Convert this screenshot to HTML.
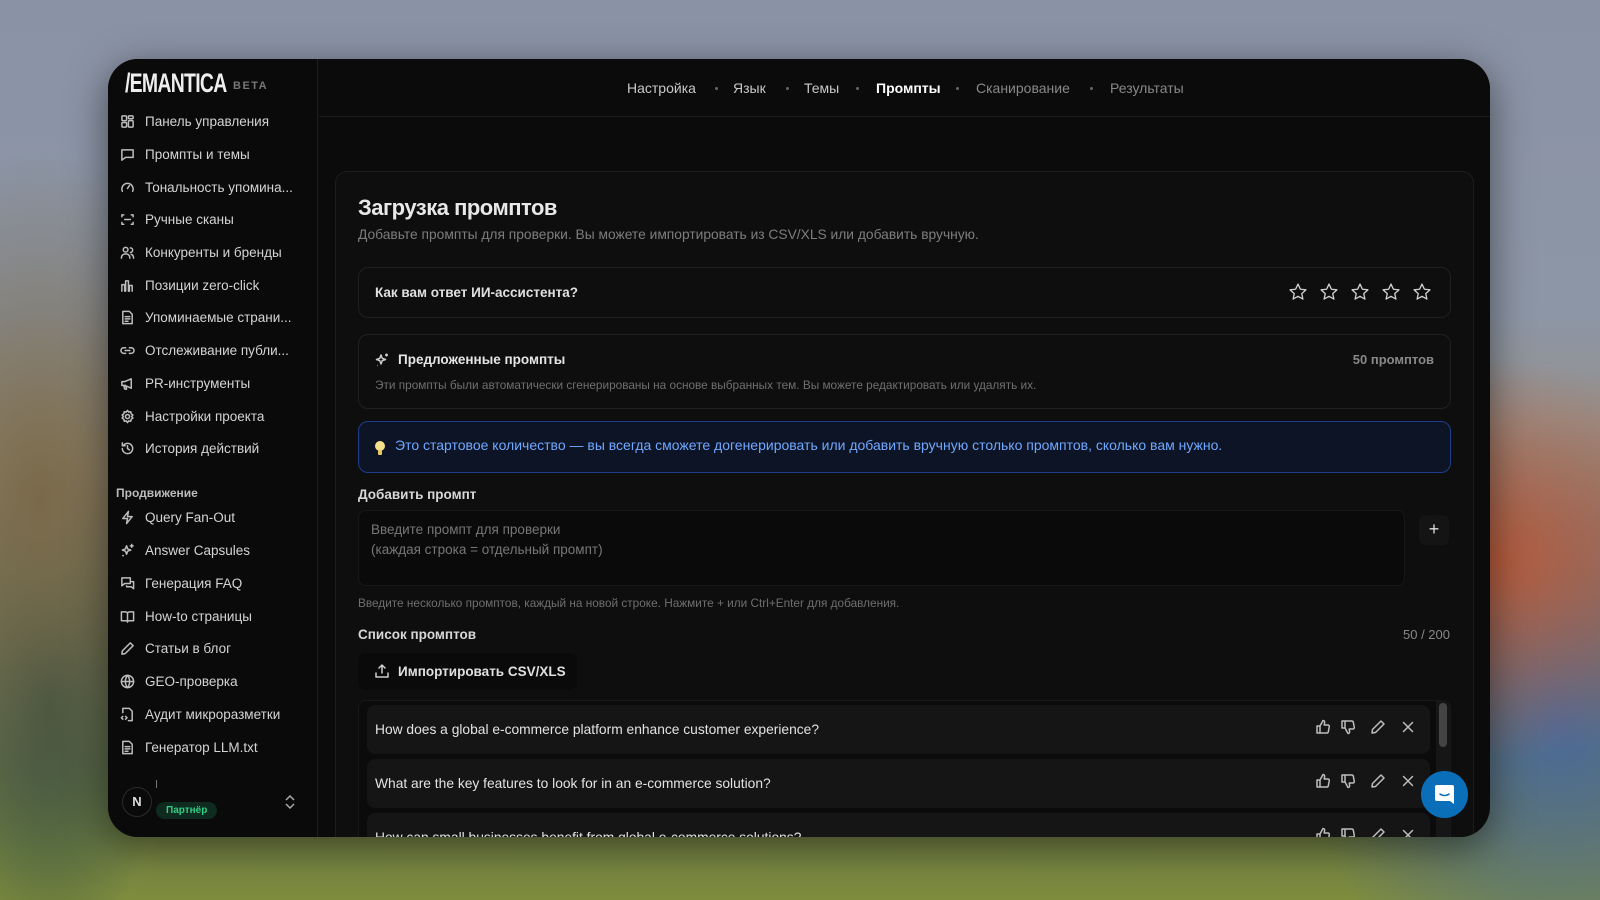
<!DOCTYPE html>
<html><head><meta charset="utf-8">
<style>
*{box-sizing:border-box;margin:0;padding:0}
body{width:1600px;height:900px;overflow:hidden;position:relative;font-family:"Liberation Sans","DejaVu Sans",sans-serif;
background:
radial-gradient(ellipse 300px 200px at 1480px 560px,#b85a3a 0%,rgba(184,90,58,0) 100%),
radial-gradient(ellipse 260px 300px at 1560px 720px,#4a6a9a 0%,rgba(74,106,154,0) 100%),
radial-gradient(ellipse 200px 350px at 40px 500px,#7a6a4a 0%,rgba(122,106,74,0) 100%),
radial-gradient(ellipse 120px 250px at 50px 700px,#2e4a3a 0%,rgba(46,74,58,0) 100%),
linear-gradient(180deg,#8a93a6 0%,#8d96a6 35%,#9a8e7a 55%,#6c7a4e 85%,#7e8c3e 100%);}
.abs{position:absolute}
.win{left:108px;top:59px;width:1382px;height:778px;background:#0b0b0c;border-radius:30px;overflow:hidden;box-shadow:0 10px 40px rgba(0,0,0,.5)}
.side{left:0;top:0;width:210px;height:100%;background:#0a0a0a;border-right:1px solid #1e1e1e}
.nav{position:absolute;left:12px;display:flex;align-items:center;color:#d4d4d4;font-size:13.5px;white-space:nowrap}
.nav svg{width:15px;height:15px;margin-right:10px;stroke:#bdbdbd;fill:none;stroke-width:1.6;stroke-linecap:round;stroke-linejoin:round}
.top{left:211px;top:0;right:0;height:58px;border-bottom:1px solid #1c1c1c;background:#0b0b0c}
.tn{position:absolute;top:21px;font-size:14px;color:#c8c8c8}
.dot{position:absolute;top:28px;width:3px;height:3px;border-radius:50%;background:#666}
.card{left:227px;top:112px;width:1139px;height:700px;background:#0e0e0f;border:1px solid #1d1d1e;border-radius:12px}
.box{position:absolute;border:1px solid #202022;border-radius:10px;background:#0e0e0f}
.star{width:20px;height:20px;fill:none;stroke:#cfcfcf;stroke-width:1.6;stroke-linejoin:round}
.item{position:absolute;left:8px;width:1063px;height:49px;background:#151516;border-radius:8px;color:#e3e3e3;font-size:13.8px;padding:17px 0 0 8px}
.acts{position:absolute;right:14px;top:14px;display:flex;gap:9px}
.acts svg{width:16px;height:16px;fill:none;stroke:#bdbdbd;stroke-width:1.5;stroke-linecap:round;stroke-linejoin:round}
.acts svg.m{margin-left:5px}
</style></head><body>
<div class="abs win">
 <div class="abs side">
  <div class="abs" style="left:17px;top:9px;font-family:'Liberation Sans Narrow','Liberation Sans',sans-serif;font-weight:bold;font-size:27px;color:#eee;letter-spacing:-1px;transform:scaleX(.72);transform-origin:left;white-space:nowrap">/EMANTICA</div>
  <div class="abs" style="left:125px;top:21px;font-size:11px;color:#777;letter-spacing:1.5px;font-weight:bold">BETA</div>
  <div class="nav" style="top:55px"><svg viewBox="0 0 16 16"><rect x="2" y="2" width="5" height="5" rx="1"/><rect x="9" y="2" width="5" height="3" rx="1"/><rect x="2" y="9" width="5" height="5" rx="1"/><rect x="9" y="7" width="5" height="7" rx="1"/></svg>Панель управления</div>
  <div class="nav" style="top:88px"><svg viewBox="0 0 16 16"><path d="M2 3h12v8H6l-4 3z"/></svg>Промпты и темы</div>
  <div class="nav" style="top:121px"><svg viewBox="0 0 16 16"><path d="M2.5 12a6 6 0 1 1 11 0"/><path d="M8 9l2-3"/></svg>Тональность упомина...</div>
  <div class="nav" style="top:153px"><svg viewBox="0 0 16 16"><path d="M2 5V3h2M12 3h2v2M2 11v2h2M12 13h2v-2M5 8h6"/></svg>Ручные сканы</div>
  <div class="nav" style="top:186px"><svg viewBox="0 0 16 16"><circle cx="6" cy="5" r="2.5"/><path d="M1.5 14c0-3 2-4.5 4.5-4.5s4.5 1.5 4.5 4.5M11 3a2.5 2.5 0 0 1 0 5M14.5 14c0-2-1-3.5-2.5-4"/></svg>Конкуренты и бренды</div>
  <div class="nav" style="top:219px"><svg viewBox="0 0 16 16"><path d="M2 14V7h3v7M6 14V3h3v11M10 14V8h3v6"/></svg>Позиции zero-click</div>
  <div class="nav" style="top:251px"><svg viewBox="0 0 16 16"><path d="M3 1.5h7l3 3v10H3z M5.5 7h5M5.5 9.5h5M5.5 12h3"/></svg>Упоминаемые страни...</div>
  <div class="nav" style="top:284px"><svg viewBox="0 0 16 16"><path d="M6 5H4a3 3 0 0 0 0 6h2M10 5h2a3 3 0 0 1 0 6h-2M5.5 8h5"/></svg>Отслеживание публи...</div>
  <div class="nav" style="top:317px"><svg viewBox="0 0 16 16"><path d="M2 6v4h3l7 3V3L5 6z M4 10l1 4h2l-1-4"/></svg>PR-инструменты</div>
  <div class="nav" style="top:350px"><svg viewBox="0 0 16 16"><circle cx="8" cy="8" r="2.2"/><path d="M8 1.5l1.3 1.8 2.2-.4.4 2.2 1.8 1.3-1.2 1.6 1.2 1.6-1.8 1.3-.4 2.2-2.2-.4L8 14.5l-1.3-1.8-2.2.4-.4-2.2L2.3 9.6 3.5 8 2.3 6.4l1.8-1.3.4-2.2 2.2.4z"/></svg>Настройки проекта</div>
  <div class="nav" style="top:382px"><svg viewBox="0 0 16 16"><path d="M2.5 8a5.5 5.5 0 1 0 1.6-3.9M2.5 2v3h3M8 5v3l2 1.5"/></svg>История действий</div>
  <div class="abs" style="left:8px;top:427px;font-size:12px;color:#bbb;font-weight:bold">Продвижение</div>
  <div class="nav" style="top:451px"><svg viewBox="0 0 16 16"><path d="M9 1.5L3 9h5l-1 5.5L13 7H8z"/></svg>Query Fan-Out</div>
  <div class="nav" style="top:484px"><svg viewBox="0 0 16 16"><path d="M7 3l1.2 3.3L11.5 7.5 8.2 8.7 7 12 5.8 8.7 2.5 7.5 5.8 6.3z M12.5 1.5v3M11 3h3M3 13.5h.5"/></svg>Answer Capsules</div>
  <div class="nav" style="top:517px"><svg viewBox="0 0 16 16"><path d="M2 2h9v6H5l-3 2.5z M7 10.5v1h5l2.5 2V6h-2"/></svg>Генерация FAQ</div>
  <div class="nav" style="top:550px"><svg viewBox="0 0 16 16"><path d="M1.5 3h4.5a2 2 0 0 1 2 2v9a1.5 1.5 0 0 0-1.5-1.5h-5z M14.5 3H10a2 2 0 0 0-2 2v9a1.5 1.5 0 0 1 1.5-1.5h5z"/></svg>How-to страницы</div>
  <div class="nav" style="top:582px"><svg viewBox="0 0 16 16"><path d="M11 2l3 3-8.5 8.5L2 14l.5-3.5z"/></svg>Статьи в блог</div>
  <div class="nav" style="top:615px"><svg viewBox="0 0 16 16"><circle cx="8" cy="8" r="6.5"/><path d="M1.5 8h13M8 1.5c-3 3.5-3 9.5 0 13M8 1.5c3 3.5 3 9.5 0 13"/></svg>GEO-проверка</div>
  <div class="nav" style="top:648px"><svg viewBox="0 0 16 16"><path d="M3 6V1.5h7l3 3V14.5H9M3 10l-1.5 1.5L3 13M6 10l1.5 1.5L6 13"/></svg>Аудит микроразметки</div>
  <div class="nav" style="top:681px"><svg viewBox="0 0 16 16"><path d="M3 1.5h7l3 3v10H3z M5.5 7h5M5.5 9.5h5M5.5 12h3"/></svg>Генератор LLM.txt</div>
  <div class="abs" style="left:14px;top:728px;width:30px;height:30px;border-radius:50%;border:1px solid #2a2a2a;color:#ddd;font-size:13px;font-weight:bold;text-align:center;line-height:28px">N</div>
  <div class="abs" style="left:48px;top:721px;width:1px;height:8px;background:#777"></div>
  <div class="abs" style="left:48px;top:743px;padding:3px 10px;border-radius:10px;background:#0f2a1e;color:#2fcf85;font-size:10px;font-weight:bold">Партнёр</div>
  <svg class="abs" style="left:174px;top:734px" width="16" height="18" viewBox="0 0 16 18" fill="none" stroke="#aaa" stroke-width="1.5"><path d="M4 7l4-4 4 4M4 11l4 4 4-4"/></svg>
 </div>
 <div class="abs top">
  <div class="tn" style="left:308px">Настройка</div><div class="dot" style="left:396px"></div>
  <div class="tn" style="left:414px">Язык</div><div class="dot" style="left:467px"></div>
  <div class="tn" style="left:485px">Темы</div><div class="dot" style="left:537px"></div>
  <div class="tn" style="left:557px;color:#fff;font-weight:bold">Промпты</div><div class="dot" style="left:637px"></div>
  <div class="tn" style="left:657px;color:#888">Сканирование</div><div class="dot" style="left:771px"></div>
  <div class="tn" style="left:791px;color:#888">Результаты</div>
 </div>
 <div class="abs card">
  <div class="abs" style="left:22px;top:23px;font-size:22px;font-weight:bold;color:#e8e8e8;letter-spacing:-.5px">Загрузка промптов</div>
  <div class="abs" style="left:22px;top:55px;font-size:13.8px;color:#7d7d7d">Добавьте промпты для проверки. Вы можете импортировать из CSV/XLS или добавить вручную.</div>
  <div class="box" style="left:22px;top:95px;width:1093px;height:51px">
   <div class="abs" style="left:16px;top:17px;font-size:13.5px;color:#e0e0e0;font-weight:bold">Как вам ответ ИИ-ассистента?</div>
   <div class="abs" style="right:18px;top:14px;display:flex;gap:11px">
    <svg class="star" viewBox="0 0 24 24"><path d="M12 2.5l2.9 6.2 6.6.7-5 4.5 1.4 6.6L12 17.2l-5.9 3.3 1.4-6.6-5-4.5 6.6-.7z"/></svg>
    <svg class="star" viewBox="0 0 24 24"><path d="M12 2.5l2.9 6.2 6.6.7-5 4.5 1.4 6.6L12 17.2l-5.9 3.3 1.4-6.6-5-4.5 6.6-.7z"/></svg>
    <svg class="star" viewBox="0 0 24 24"><path d="M12 2.5l2.9 6.2 6.6.7-5 4.5 1.4 6.6L12 17.2l-5.9 3.3 1.4-6.6-5-4.5 6.6-.7z"/></svg>
    <svg class="star" viewBox="0 0 24 24"><path d="M12 2.5l2.9 6.2 6.6.7-5 4.5 1.4 6.6L12 17.2l-5.9 3.3 1.4-6.6-5-4.5 6.6-.7z"/></svg>
    <svg class="star" viewBox="0 0 24 24"><path d="M12 2.5l2.9 6.2 6.6.7-5 4.5 1.4 6.6L12 17.2l-5.9 3.3 1.4-6.6-5-4.5 6.6-.7z"/></svg>
   </div>
  </div>
  <div class="box" style="left:22px;top:162px;width:1093px;height:75px">
   <svg class="abs" style="left:15px;top:17px" width="16" height="16" viewBox="0 0 16 16" fill="none" stroke="#ccc" stroke-width="1.5" stroke-linejoin="round"><path d="M7 3l1.2 3.3L11.5 7.5 8.2 8.7 7 12 5.8 8.7 2.5 7.5 5.8 6.3z M12.5 1.5v3M11 3h3M3 13.5h.5"/></svg>
   <div class="abs" style="left:39px;top:17px;font-size:13.5px;color:#e6e6e6;font-weight:bold">Предложенные промпты</div>
   <div class="abs" style="right:16px;top:17px;font-size:13px;color:#888;font-weight:bold">50 промптов</div>
   <div class="abs" style="left:16px;top:43px;font-size:11.8px;color:#6f6f6f">Эти промпты были автоматически сгенерированы на основе выбранных тем. Вы можете редактировать или удалять их.</div>
  </div>
  <div class="box" style="left:22px;top:249px;width:1093px;height:52px;background:#0d1426;border-color:#1e3d8a">
   <svg class="abs" style="left:14px;top:17px" width="14" height="18" viewBox="0 0 14 18"><circle cx="7" cy="7" r="5" fill="#f4e08a"/><rect x="5" y="11" width="4" height="5" rx="1" fill="#e8c860"/></svg>
   <div class="abs" style="left:36px;top:15px;font-size:14px;color:#6fa8ff">Это стартовое количество — вы всегда сможете догенерировать или добавить вручную столько промптов, сколько вам нужно.</div>
  </div>
  <div class="abs" style="left:22px;top:315px;font-size:13.5px;color:#d8d8d8;font-weight:bold">Добавить промпт</div>
  <div class="abs" style="left:22px;top:338px;width:1047px;height:76px;background:#0a0a0a;border:1px solid #18181a;border-radius:8px;padding:9px 12px;font-size:13.5px;line-height:20px;color:#777">Введите промпт для проверки<br>(каждая строка = отдельный промпт)</div>
  <div class="abs" style="left:1083px;top:343px;width:30px;height:30px;border-radius:6px;background:#141415;color:#ddd;font-size:18px;text-align:center;line-height:28px">+</div>
  <div class="abs" style="left:22px;top:424px;font-size:11.8px;color:#6f6f6f">Введите несколько промптов, каждый на новой строке. Нажмите + или Ctrl+Enter для добавления.</div>
  <div class="abs" style="left:22px;top:455px;font-size:13.5px;color:#d8d8d8;font-weight:bold">Список промптов</div>
  <div class="abs" style="right:23px;top:455px;font-size:13px;color:#888">50 / 200</div>
  <div class="abs" style="left:22px;top:481px;width:219px;height:37px;background:#0a0a0a;border-radius:8px;color:#e0e0e0;font-size:13.5px;font-weight:bold;padding:11px 0 0 40px">
   <svg class="abs" style="left:16px;top:10px" width="16" height="16" viewBox="0 0 16 16" fill="none" stroke="#ccc" stroke-width="1.5" stroke-linecap="round" stroke-linejoin="round"><path d="M8 10V2M5 5l3-3 3 3M2 10v4h12v-4"/></svg>Импортировать CSV/XLS</div>
  <div class="abs" style="left:22px;top:528px;width:1093px;height:150px;border:1px solid #18181a;border-radius:8px;background:#0b0b0c;overflow:hidden">
   <div class="item" style="top:4px">How does a global e-commerce platform enhance customer experience?
    <div class="acts"><svg viewBox="0 0 16 16"><path d="M2 7h3v7H2zM5 7l3-5.5c1.2 0 1.8.8 1.6 2L9.2 6H13a1.3 1.3 0 0 1 1.3 1.5l-1 5.3A1.5 1.5 0 0 1 11.8 14H5"/></svg><svg viewBox="0 0 16 16"><path d="M2 2h3v7H2zM5 9l3 5.5c1.2 0 1.8-.8 1.6-2L9.2 10H13a1.3 1.3 0 0 0 1.3-1.5l-1-5.3A1.5 1.5 0 0 0 11.8 2H5"/></svg><svg class="m" viewBox="0 0 16 16"><path d="M11 2l3 3-8.5 8.5L2 14l.5-3.5z"/></svg><svg class="m" viewBox="0 0 16 16"><path d="M3.5 3.5l9 9M12.5 3.5l-9 9"/></svg></div></div>
   <div class="item" style="top:58px">What are the key features to look for in an e-commerce solution?
    <div class="acts"><svg viewBox="0 0 16 16"><path d="M2 7h3v7H2zM5 7l3-5.5c1.2 0 1.8.8 1.6 2L9.2 6H13a1.3 1.3 0 0 1 1.3 1.5l-1 5.3A1.5 1.5 0 0 1 11.8 14H5"/></svg><svg viewBox="0 0 16 16"><path d="M2 2h3v7H2zM5 9l3 5.5c1.2 0 1.8-.8 1.6-2L9.2 10H13a1.3 1.3 0 0 0 1.3-1.5l-1-5.3A1.5 1.5 0 0 0 11.8 2H5"/></svg><svg class="m" viewBox="0 0 16 16"><path d="M11 2l3 3-8.5 8.5L2 14l.5-3.5z"/></svg><svg class="m" viewBox="0 0 16 16"><path d="M3.5 3.5l9 9M12.5 3.5l-9 9"/></svg></div></div>
   <div class="item" style="top:112px">How can small businesses benefit from global e-commerce solutions?
    <div class="acts"><svg viewBox="0 0 16 16"><path d="M2 7h3v7H2zM5 7l3-5.5c1.2 0 1.8.8 1.6 2L9.2 6H13a1.3 1.3 0 0 1 1.3 1.5l-1 5.3A1.5 1.5 0 0 1 11.8 14H5"/></svg><svg viewBox="0 0 16 16"><path d="M2 2h3v7H2zM5 9l3 5.5c1.2 0 1.8-.8 1.6-2L9.2 10H13a1.3 1.3 0 0 0 1.3-1.5l-1-5.3A1.5 1.5 0 0 0 11.8 2H5"/></svg><svg class="m" viewBox="0 0 16 16"><path d="M11 2l3 3-8.5 8.5L2 14l.5-3.5z"/></svg><svg class="m" viewBox="0 0 16 16"><path d="M3.5 3.5l9 9M12.5 3.5l-9 9"/></svg></div></div>
   <div class="abs" style="left:1077px;top:0;width:14px;height:150px;background:#161617"></div>
   <div class="abs" style="left:1080px;top:2px;width:8px;height:44px;border-radius:4px;background:#444"></div>
  </div>
 </div>
</div>
<div class="abs" style="left:1421px;top:771px;width:47px;height:47px;border-radius:50%;background:#0a6fb8">
 <svg class="abs" style="left:12px;top:12px" width="23" height="23" viewBox="0 0 23 23"><path d="M4 2h15a2 2 0 0 1 2 2v17l-4-3H4a2 2 0 0 1-2-2V4a2 2 0 0 1 2-2z" fill="#fff"/><path d="M7 11c2.5 2 6.5 2 9 0" stroke="#0a6fb8" stroke-width="1.5" fill="none" stroke-linecap="round"/></svg>
</div>
</body></html>
